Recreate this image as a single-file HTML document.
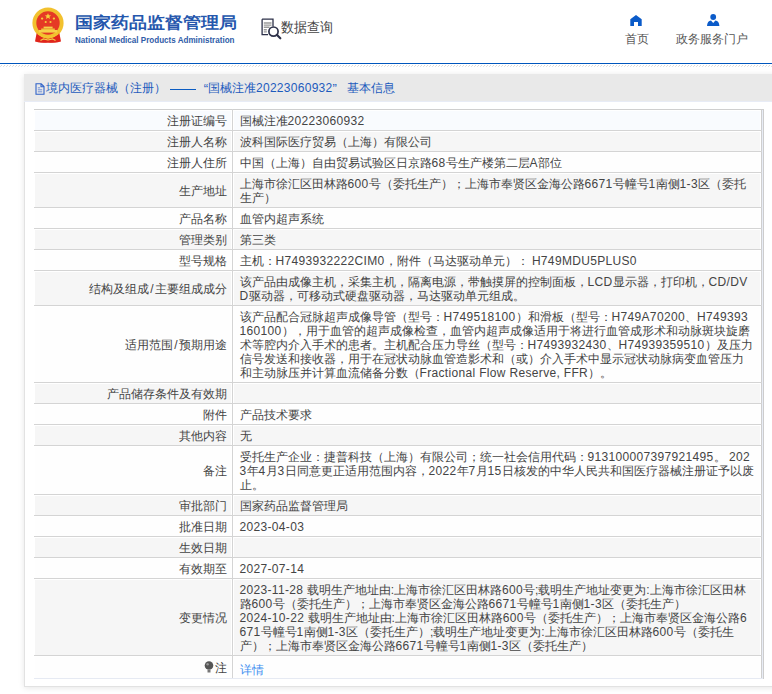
<!DOCTYPE html>
<html><head><meta charset="utf-8">
<style>
*{margin:0;padding:0;box-sizing:border-box}
html,body{width:772px;height:694px;overflow:hidden;background:#fff}
body{font-family:"Liberation Sans",sans-serif;font-size:12px;color:#555;position:relative}
.abs{position:absolute;white-space:nowrap}
#emblem{left:30px;top:6px}
#t1{left:75px;top:10px;font-size:18px;font-weight:bold;color:#2557ad;line-height:24px;transform:scaleY(.89);transform-origin:0 21px}
#t2{left:75px;top:34px;font-size:9px;font-weight:bold;color:#2f5ca8;line-height:12px;transform:scaleX(.895);transform-origin:0 0}
#dq{left:261px;top:18px}
#dqt{left:281px;top:17px;font-size:13px;color:#444;line-height:20px;transform:scaleY(1.08);transform-origin:0 0}
.nav{color:#555;font-size:12px;line-height:16px;text-align:center}
#n1{left:625px;top:31px}
#n2{left:676px;top:31px}
#hl{left:0;top:63px;width:772px;height:1px;background:#0056bd}
#box{position:absolute;left:24px;top:74px;width:800px;height:613px;background:#fff;border-left:1px solid #e2e2e2;border-bottom:1px solid #e2e2e2;box-shadow:0 1px 6px rgba(0,0,0,.1)}
#bh{position:absolute;left:-1px;top:0;width:801px;height:28px;background:#e9e9e9;border-bottom:1px solid #e8ecf6}
#bht{position:absolute;left:11px;top:6px;font-size:12px;color:#1d5bbd;line-height:17px;white-space:nowrap}
#bht svg.doc{position:absolute;left:0;top:3px}
#bht .tt{position:relative}
#bht span{display:inline-block;vertical-align:top}
#bht .dash{width:26px;height:1px;background:#0b5cc2;margin:9px 7px 0 4px}
#bht .q1{width:5px;text-align:right;font-size:13px}
#bht .q2{width:14px;text-align:left;font-size:13px}
#bht .tt:first-of-type{margin-left:11px}
table{position:absolute;left:9px;top:35px;width:728px;border-collapse:collapse;table-layout:fixed;border-top:1px solid #cfcfcf;}
td{border-bottom:1px solid #d4d4d4;line-height:14px;padding:4px 0 2px 7px;vertical-align:middle;color:#444;font-size:12px}
td.l{width:198px;text-align:right;border-right:1px solid #d4d4d4;padding:4px 5px 2px 0}
.sl{font-style:normal;padding:0 1px}
td.v{border-right:1px solid #cfcfcf}
td{box-shadow:inset -1px 1px 0 #fff,inset 1px 0 0 #fff}
.ln{display:block;white-space:nowrap}
.ln i{font-style:normal;letter-spacing:.33px}
tr:nth-child(even) td{background:#f6f6f6}
tr:nth-child(odd) td{background:#fefefe}
tr:first-child td{background:#f9fbfe}
tr.last td{border-bottom-color:#e6eaf3;height:23px}
tr.last td.v{padding-top:4px;padding-bottom:2px}
.bulb{vertical-align:-1px;margin-right:1px}
a{color:#3c8ef0;text-decoration:none;font-size:12px;line-height:16px;position:relative;top:2px}
</style></head><body>
<svg id="emblem" class="abs" viewBox="0 0 36 39" width="36" height="39">
<path d="M7 25 L5 35.5 Q11 37.5 18 36.5 Q25 37.5 31 35.5 L29 25 Z" fill="#e0251b"/>
<circle cx="18" cy="17" r="15.6" fill="#f2c12e"/>
<path d="M7.5 27.5 Q12 32.8 18 33 Q24 32.8 28.5 27.5 L30 35 Q24 37 18 36.5 Q12 37 6 35Z" fill="#e0251b"/>
<circle cx="18" cy="17" r="11.7" fill="#e53a25"/>
<rect x="8.8" y="24" width="18.4" height="2.6" fill="#f6d249"/>
<rect x="13.6" y="20.6" width="9" height="1.9" fill="#f6d249"/>
<rect x="11.2" y="22.5" width="13.6" height="1.5" fill="#efc23a"/>
<path d="M18 7.2 L18.9 9.3 L21.1 9.4 L19.4 10.8 L20 13 L18 11.8 L16 13 L16.6 10.8 L14.9 9.4 L17.1 9.3Z" fill="#f7d23c"/>
<circle cx="12.1" cy="12.6" r="1.15" fill="#f5cf3a"/><circle cx="23.9" cy="12.6" r="1.15" fill="#f5cf3a"/>
<circle cx="15.7" cy="16" r="1.05" fill="#f5cf3a"/><circle cx="20.5" cy="16" r="1.05" fill="#f5cf3a"/>
<path d="M8 28 Q13 31.5 18 30 Q23 31.5 28 28" stroke="#f3c431" stroke-width="1.5" fill="none"/>
<path d="M10.5 34.5 L13.5 32.8 L18 34 L22.5 32.8 L25.5 34.5" stroke="#f5d04a" stroke-width="1.2" fill="none"/>
<ellipse cx="18" cy="31.5" rx="2.2" ry="1.2" fill="#f3c431"/>
</svg>
<div id="t1" class="abs">国家药品监督管理局</div>
<div id="t2" class="abs">National Medical Products Administration</div>
<svg id="dq" class="abs" width="22" height="22" viewBox="0 0 22 22">
<path d="M1.1 1.2 H12 V8.5 M1.1 1.2 V16.7 H7" stroke="#2d3149" stroke-width="1.3" fill="none"/>
<path d="M2.8 5 H10.5 M2.8 7.1 H10.5 M2.8 9.2 H8.5 M2.8 11.8 H5.8 M2.8 13.9 H5.8" stroke="#9a9a9a" stroke-width="1.4"/>
<circle cx="12.5" cy="13.6" r="4.6" stroke="#2d3149" stroke-width="1.7" fill="none"/>
<path d="M15.8 16.8 L19.3 20.3" stroke="#2d3149" stroke-width="2.2" stroke-linecap="round"/>
</svg>
<div id="dqt" class="abs">数据查询</div>
<svg class="abs" style="left:630px;top:15px" width="12" height="11" viewBox="0 0 12 11"><path d="M6 0 L11.7 4.2 V11 H8 V7 H4 V11 H0.3 V4.2Z" fill="#0b5bc9"/></svg>
<div id="n1" class="abs nav">首页</div>
<svg class="abs" style="left:707px;top:14px" width="13" height="13" viewBox="0 0 13 13"><circle cx="6.2" cy="3" r="2.9" fill="#0b5bc9"/><path d="M0 12 Q0.3 7 4 6.6 L6.2 9 L8.4 6.6 Q12.1 7 12.4 12Z" fill="#0b5bc9"/></svg>
<div id="n2" class="abs nav">政务服务门户</div>
<div id="hl" class="abs"></div>
<svg class="abs" style="left:0;top:65px" width="772" height="2"><defs><pattern id="hp" width="3" height="2" patternUnits="userSpaceOnUse"><rect x="1" y="0" width="1" height="1" fill="#d9d9d9"/><rect x="0" y="1" width="1" height="1" fill="#e2e2e2"/></pattern></defs><rect width="772" height="2" fill="url(#hp)"/></svg>
<div id="box">
<div id="bh"><div id="bht"><svg class="doc" width="10" height="12" viewBox="0 0 10 12"><path d="M1 .8 H6.2 L9 3.6 V11.2 H1 Z M6 .8 V3.8 H9" stroke="#2f62c8" stroke-width="1.1" fill="none"/><path d="M2.8 4.8 H5 M2.8 6.8 H7.2 M2.8 8.8 H7.2" stroke="#6f8fd6" stroke-width="1"/></svg><span class="tt">境内医疗器械（注册）</span><span class="dash"></span><span class="q1">“</span><span class="tt">国械注准<span style="letter-spacing:.28px">20223060932</span></span><span class="q2">”</span><span class="tt">基本信息</span></div></div>
<table>
<tr><td class="l">注册证编号</td><td class="v"><span class="ln">国械注准<i>20223060932</i></span></td></tr>
<tr><td class="l">注册人名称</td><td class="v"><span class="ln">波科国际医疗贸易（上海）有限公司</span></td></tr>
<tr><td class="l">注册人住所</td><td class="v"><span class="ln">中国（上海）自由贸易试验区日京路<i>68</i>号生产楼第二层<i>A</i>部位</span></td></tr>
<tr><td class="l">生产地址</td><td class="v"><span class="ln">上海市徐汇区田林路<i>600</i>号（委托生产）；上海市奉贤区金海公路<i>6671</i>号幢号<i>1</i>南侧<i>1-3</i>区（委托</span><span class="ln">生产）</span></td></tr>
<tr><td class="l">产品名称</td><td class="v"><span class="ln">血管内超声系统</span></td></tr>
<tr><td class="l">管理类别</td><td class="v"><span class="ln">第三类</span></td></tr>
<tr><td class="l">型号规格</td><td class="v"><span class="ln">主机：<i>H7493932222CIM0</i>，附件（马达驱动单元）： <i>H749MDU5PLUS0</i></span></td></tr>
<tr><td class="l">结构及组成<i class="sl">/</i>主要组成成分</td><td class="v"><span class="ln">该产品由成像主机，采集主机，隔离电源，带触摸屏的控制面板，<i>LCD</i>显示器，打印机，<i>CD/DV</i></span><span class="ln"><i>D</i>驱动器，可移动式硬盘驱动器，马达驱动单元组成。</span></td></tr>
<tr><td class="l">适用范围<i class="sl">/</i>预期用途</td><td class="v"><span class="ln">该产品配合冠脉超声成像导管（型号：<i>H749518100</i>）和滑板（型号：<i>H749A70200</i>、<i>H749393</i></span><span class="ln"><i>160100</i>），用于血管的超声成像检查，血管内超声成像适用于将进行血管成形术和动脉斑块旋磨</span><span class="ln">术等腔内介入手术的患者。主机配合压力导丝（型号：<i>H7493932430</i>、<i>H74939359510</i>）及压力</span><span class="ln">信号发送和接收器，用于在冠状动脉血管造影术和（或）介入手术中显示冠状动脉病变血管压力</span><span class="ln">和主动脉压并计算血流储备分数（<i>Fractional Flow Reserve, FFR</i>）。</span></td></tr>
<tr><td class="l">产品储存条件及有效期</td><td class="v">&nbsp;</td></tr>
<tr><td class="l">附件</td><td class="v"><span class="ln">产品技术要求</span></td></tr>
<tr><td class="l">其他内容</td><td class="v"><span class="ln">无</span></td></tr>
<tr><td class="l">备注</td><td class="v"><span class="ln">受托生产企业：捷普科技（上海）有限公司；统一社会信用代码：<i>913100007397921495</i>。 <i>202</i></span><span class="ln"><i>3</i>年<i>4</i>月<i>3</i>日同意更正适用范围内容，<i>2022</i>年<i>7</i>月<i>15</i>日核发的中华人民共和国医疗器械注册证予以废</span><span class="ln">止。</span></td></tr>
<tr><td class="l">审批部门</td><td class="v"><span class="ln">国家药品监督管理局</span></td></tr>
<tr><td class="l">批准日期</td><td class="v"><span class="ln"><i>2023-04-03</i></span></td></tr>
<tr><td class="l">生效日期</td><td class="v">&nbsp;</td></tr>
<tr><td class="l">有效期至</td><td class="v"><span class="ln"><i>2027-07-14</i></span></td></tr>
<tr><td class="l">变更情况</td><td class="v"><span class="ln"><i>2023-11-28</i> 载明生产地址由:上海市徐汇区田林路<i>600</i>号;载明生产地址变更为:上海市徐汇区田林</span><span class="ln">路<i>600</i>号（委托生产）；上海市奉贤区金海公路<i>6671</i>号幢号<i>1</i>南侧<i>1-3</i>区（委托生产）</span><span class="ln"><i>2024-10-22</i> 载明生产地址由:上海市徐汇区田林路<i>600</i>号（委托生产）；上海市奉贤区金海公路<i>6</i></span><span class="ln"><i>671</i>号幢号<i>1</i>南侧<i>1-3</i>区（委托生产）;载明生产地址变更为:上海市徐汇区田林路<i>600</i>号（委托生</span><span class="ln">产）；上海市奉贤区金海公路<i>6671</i>号幢号<i>1</i>南侧<i>1-3</i>区（委托生产）</span></td></tr>
<tr class="last"><td class="l"><svg class="bulb" width="10" height="12" viewBox="0 0 10 12"><circle cx="5" cy="4.5" r="4.3" fill="#555"/><rect x="3.5" y="9" width="3" height="2.5" fill="#777"/><circle cx="3.6" cy="3.2" r="1.2" fill="#999"/></svg>注</td><td class="v"><a>详情</a></td></tr>
</table>
<div style="position:absolute;left:737px;top:35px;width:2px;height:570px;border-top:1px solid #cfcfcf;background:linear-gradient(to right,#e8ecf5 1px,#cdcdcd 1px)"></div>
</div>
</body></html>
